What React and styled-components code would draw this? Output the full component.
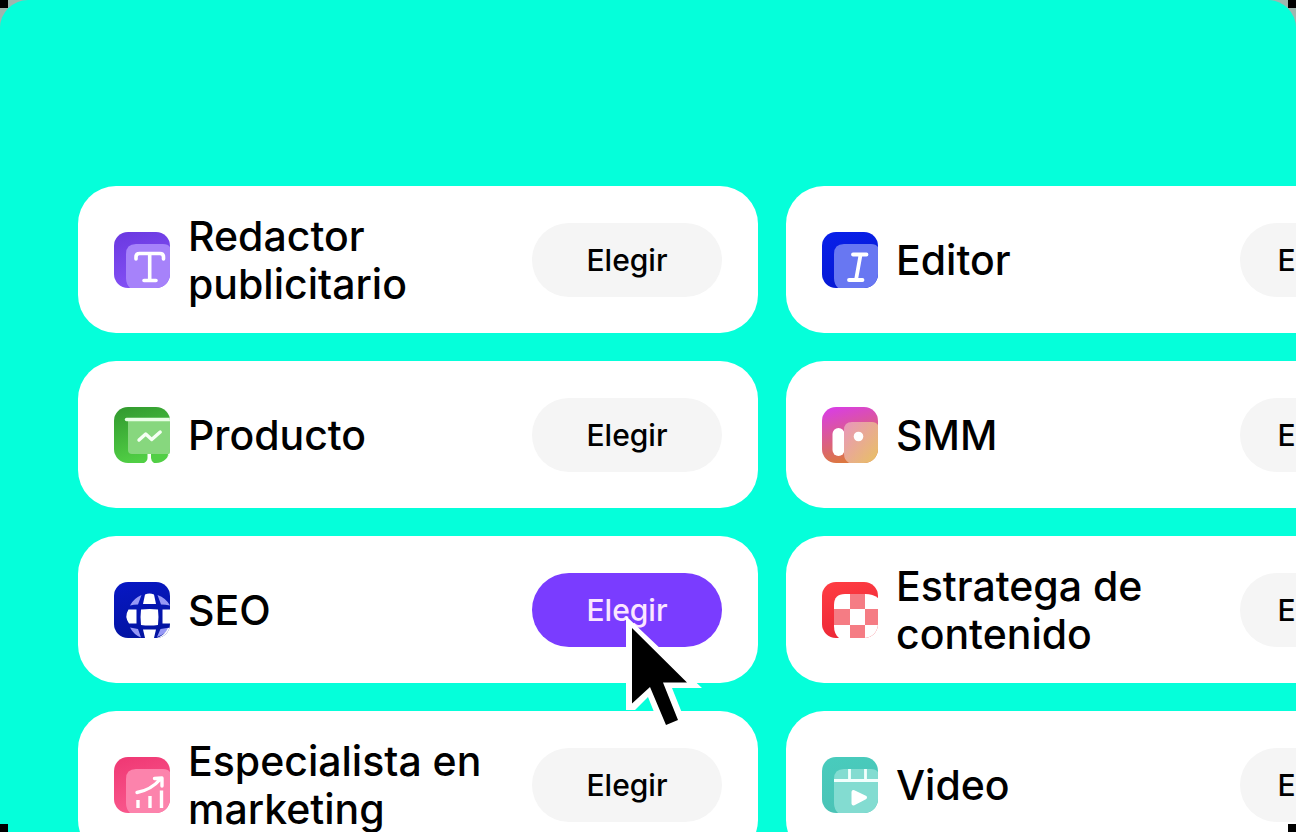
import React from 'react';
import styled, { createGlobalStyle, css } from 'styled-components';

const GlobalStyle = createGlobalStyle`
  *, *::before, *::after { box-sizing: border-box; }
  body {
    margin: 0;
    background: #9fb5ae;
    font-family: Inter, "Liberation Sans", sans-serif;
    color: #000;
  }
`;

const Stage = styled.main`
  position: relative;
  height: 100vh;
  overflow: hidden;
`;

const Panel = styled.section`
  min-height: 100%;
  padding: 186px 0 0 78px;
  border-radius: 28px;
  background: #05ffda;
`;

const RoleGrid = styled.ul`
  display: grid;
  grid-template-columns: 680px 646px;
  grid-auto-rows: minmax(147px, auto);
  gap: 28px;
  margin: 0;
  padding: 0;
  list-style: none;
`;

const Card = styled.li`
  display: flex;
  align-items: center;
  gap: 18px;
  padding: 0 36px;
  border-radius: 38px;
  background: #fff;
`;

const Icon = styled.svg`
  flex: none;
  width: 56px;
  height: 56px;
`;

const RoleName = styled.h2`
  flex: 1;
  margin: 0;
  font-size: 41px;
  line-height: 48px;
  font-weight: 500;
`;

const Action = styled.div`
  position: relative;
  flex: none;
`;

const ChooseButton = styled.button`
  display: block;
  width: ${({ $compact }) => ($compact ? 156 : 190)}px;
  height: 74px;
  padding: 0;
  border: 0;
  border-radius: 37px;
  background: #f5f5f5;
  color: #000;
  font: 500 30px/40px Inter, "Liberation Sans", sans-serif;
  cursor: pointer;
  ${({ $active }) => $active && css`
    background: #7a3cff;
    color: #fbe6ff;
  `}
`;

const Pointer = styled.svg`
  position: absolute;
  z-index: 2;
  left: 88px;
  top: 37px;
  width: 90px;
  height: 120px;
  pointer-events: none;
`;

const Corner = styled.span`
  position: absolute;
  width: 8px;
  height: 8px;
  background: #000;
  ${({ $v }) => $v}: 0;
  ${({ $h }) => $h}: 0;
`;

function Tile({ id, from, to, inner, children }) {
  return (
    <Icon viewBox="0 0 56 56" fill="none" aria-hidden="true">
      <defs>
        <linearGradient id={`${id}-bg`} x1="0" y1="0" x2="0.3" y2="1">
          <stop stopColor={from} />
          <stop offset="1" stopColor={to} />
        </linearGradient>
        <clipPath id={`${id}-clip`}><rect width="56" height="56" rx="14" /></clipPath>
      </defs>
      <g clipPath={`url(#${id}-clip)`}>
        <rect width="56" height="56" fill={`url(#${id}-bg)`} />
        {inner && <path d="M49 12q5 0 7 3v41H16q-4-4-4-10V22q0-10 10-10z" fill={inner} />}
        {children}
      </g>
    </Icon>
  );
}

const CopyIcon = () => (
  <Tile id="copy" from="#6a38e0" to="#8350f4" inner="#a682fa">
    <path d="M22 27v-2q0-3.500 3.500-3.500h20.500q3.500 0 3.500 3.500v2M35.700 22v26M30 48.500h12" stroke="#fff" strokeWidth="3.600" strokeLinecap="round" />
  </Tile>
);

const EditorIcon = () => (
  <Tile id="editor" from="#0820ea" to="#0619d4" inner="#6877f2">
    <path d="M31 22.500h13.500M27 48h13.500M38.500 23 34 48" stroke="#fff" strokeWidth="3.800" strokeLinecap="round" />
  </Tile>
);

const ProductIcon = () => (
  <Tile id="product" from="#31982e" to="#51cf45">
    <path d="M14 13h42v34H18q-4 0-4-4z" fill="#87d77e" />
    <path d="M12.500 12.500H58" stroke="#e9ffe5" strokeWidth="3.400" strokeLinecap="round" />
    <path d="m25 33 6.700-6 6 5.500 8.500-7.500" stroke="#f5fff3" strokeWidth="3.400" strokeLinecap="round" strokeLinejoin="round" />
    <path d="M33.500 47h3.500v4q0 3 3 5H30q3.500-2 3.500-5zM56 47v9h-8q6-2 6-9z" fill="#fff" />
  </Tile>
);

const SmmIcon = () => (
  <Tile id="smm" from="#d93aee" to="#dc7740">
    <defs>
      <linearGradient id="smm-front" x1="0" y1="0" x2="1" y2="1">
        <stop stopColor="#e996be" />
        <stop offset="1" stopColor="#e8c162" />
      </linearGradient>
    </defs>
    <rect x="10.500" y="21" width="12" height="28" rx="6" fill="#fff" />
    <path d="M50 15q4 0 6 3v38H27q-5-3-5-9V23q0-8 8-8z" fill="url(#smm-front)" />
    <circle cx="36.500" cy="29.500" r="4.800" fill="#fff" />
  </Tile>
);

const SeoIcon = () => (
  <Tile id="seo" from="#0717c5" to="#0314a2">
    <path d="M29 22 31 12.500q4.500-2 9 0l2 9.500zM22.500 27.500v14h-7.500Q10 34.500 14.500 27.500zM27 27.500q8.500-1 17 0 1 8 0 15.500-8.500 1-17 0-1-7.500 0-15.500zM48.500 27.500H56v14h-7.500zM29 47.500h13L40 56h-9z" fill="#fff" />
    <path d="M27.500 13q-8 3.500-11.500 10.500 4-1 8-1zM43.500 13q8.500 3 12.500 10.500-4.500-1-9-1zM16 45.500l8 1.500 3 8.500Q20 53 16 45.500zM46.500 47l9.500-1.500Q52 52 43 55z" fill="#9698f5" />
    <path d="M43 56q8-3 11-10h2v10z" fill="#fff" />
  </Tile>
);

const StrategyIcon = () => (
  <Tile id="strategy" from="#ff3d43" to="#ed2937">
    <path d="M56 56V16Q51 12 43 12H23Q12 12 12 23v21q0 8 5 12z" fill="#fff" />
    <path d="M28 12h15v15H28zM12 27h16v16H12zM43 27h13v16H43zM28 43h15v13H28z" fill="#f57c84" />
  </Tile>
);

const MarketingIcon = () => (
  <Tile id="marketing" from="#ef3773" to="#f9578c" inner="#fc83ac">
    <path d="M23 35.500Q37 33 46.500 22M40.500 21.500l7.500-.5v8" stroke="#fff" strokeWidth="3.400" strokeLinecap="round" strokeLinejoin="round" />
    <path d="M24 43v8M36 39v12M47.500 33.500V51" stroke="#fff" strokeWidth="3.400" />
  </Tile>
);

const VideoIcon = () => (
  <Tile id="video" from="#48ccbd" to="#4bc3b6" inner="#83dcd1">
    <path d="M12 23.500h44M27.500 12v11M43.500 12v11" stroke="#f2fffd" strokeWidth="2.800" />
    <path d="M31.500 35v11.500L43 40.500z" fill="#fff" stroke="#fff" strokeWidth="4" strokeLinejoin="round" />
  </Tile>
);

const roles = [
  { name: 'Redactor publicitario', icon: CopyIcon },
  { name: 'Editor', icon: EditorIcon, compact: true },
  { name: 'Producto', icon: ProductIcon },
  { name: 'SMM', icon: SmmIcon, compact: true },
  { name: 'SEO', icon: SeoIcon, active: true },
  { name: 'Estratega de contenido', icon: StrategyIcon, compact: true },
  { name: 'Especialista en marketing', icon: MarketingIcon },
  { name: 'Video', icon: VideoIcon, compact: true },
];

export default function App() {
  return (
    <>
      <GlobalStyle />
      <Stage>
        <Panel>
          <RoleGrid>
            {roles.map(({ name, icon: RoleIcon, active, compact }) => (
              <Card key={name}>
                <RoleIcon />
                <RoleName>{name}</RoleName>
                <Action>
                  <ChooseButton type="button" $active={active} $compact={compact}>Elegir</ChooseButton>
                  {active && (
                    <Pointer viewBox="0 0 90 120" aria-hidden="true">
                      <path d="M6 6v94h9l13-13 12 30 24-9-12-30h30z" fill="#fff" />
                      <path d="M12 18v75.500L30 77l16 38 12-5-15-37.500h24z" fill="#000" />
                    </Pointer>
                  )}
                </Action>
              </Card>
            ))}
          </RoleGrid>
        </Panel>
        <Corner $v="top" $h="left" />
        <Corner $v="top" $h="right" />
        <Corner $v="bottom" $h="left" />
        <Corner $v="bottom" $h="right" />
      </Stage>
    </>
  );
}
